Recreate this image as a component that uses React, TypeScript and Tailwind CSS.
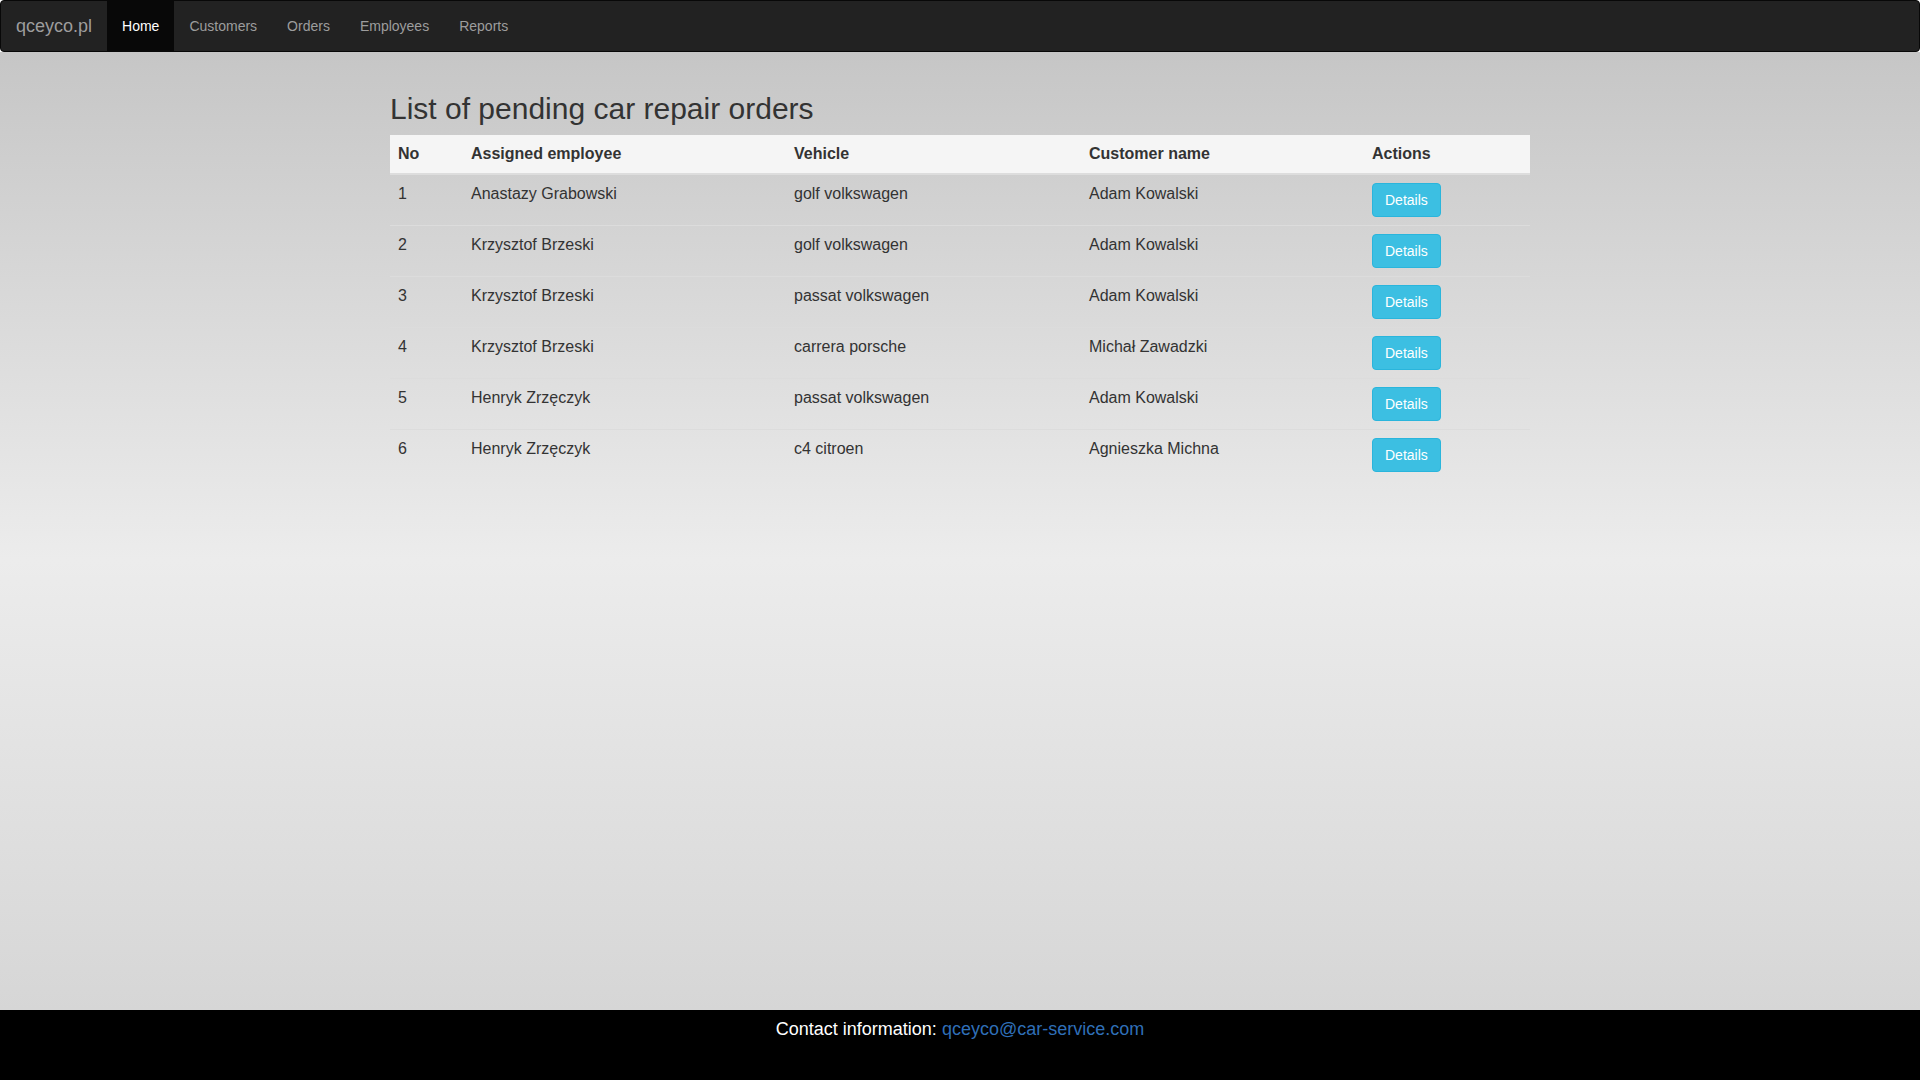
import React from "react";

const rows = [
  { no: 1, emp: "Anastazy Grabowski", vehicle: "golf volkswagen", customer: "Adam Kowalski" },
  { no: 2, emp: "Krzysztof Brzeski", vehicle: "golf volkswagen", customer: "Adam Kowalski" },
  { no: 3, emp: "Krzysztof Brzeski", vehicle: "passat volkswagen", customer: "Adam Kowalski" },
  { no: 4, emp: "Krzysztof Brzeski", vehicle: "carrera porsche", customer: "Michał Zawadzki" },
  { no: 5, emp: "Henryk Zrzęczyk", vehicle: "passat volkswagen", customer: "Adam Kowalski" },
  { no: 6, emp: "Henryk Zrzęczyk", vehicle: "c4 citroen", customer: "Agnieszka Michna" },
];

export default function App() {
  return (
    <div
      className="flex min-h-screen flex-col text-[#333]"
      style={{ fontFamily: '"Liberation Sans", Arial, sans-serif' }}
    >
      <nav className="flex h-[52px] shrink-0 items-stretch rounded border border-[#080808] bg-[#222]">
        <a className="flex items-center px-[15px] text-[18px] text-[#9d9d9d]">qceyco.pl</a>
        <a className="flex items-center bg-[#080808] px-[15px] text-[14px] text-white">Home</a>
        <a className="flex items-center px-[15px] text-[14px] text-[#9d9d9d]">Customers</a>
        <a className="flex items-center px-[15px] text-[14px] text-[#9d9d9d]">Orders</a>
        <a className="flex items-center px-[15px] text-[14px] text-[#9d9d9d]">Employees</a>
        <a className="flex items-center px-[15px] text-[14px] text-[#9d9d9d]">Reports</a>
      </nav>
      <main className="flex-1 bg-[linear-gradient(to_bottom,#c6c6c6_0%,#ececec_53%,#d6d6d6_100%)] pt-[20px]">
        <div className="mx-auto w-[1170px] px-[15px]">
          <h2 className="mt-[20px] mb-[10px] text-[30px] leading-[33px]">List of pending car repair orders</h2>
          <table className="w-full table-fixed border-collapse text-[16px] leading-[22px]">
            <colgroup>
              <col className="w-[73px]" />
              <col className="w-[323px]" />
              <col className="w-[295px]" />
              <col className="w-[283px]" />
              <col className="w-[166px]" />
            </colgroup>
            <thead>
              <tr className="bg-[#f5f5f5]">
                <th className="border-b-2 border-[#ddd] p-2 text-left align-bottom font-bold">No</th>
                <th className="border-b-2 border-[#ddd] p-2 text-left align-bottom font-bold">Assigned employee</th>
                <th className="border-b-2 border-[#ddd] p-2 text-left align-bottom font-bold">Vehicle</th>
                <th className="border-b-2 border-[#ddd] p-2 text-left align-bottom font-bold">Customer name</th>
                <th className="border-b-2 border-[#ddd] p-2 text-left align-bottom font-bold">Actions</th>
              </tr>
            </thead>
            <tbody>
              {rows.map((r, i) => (
                <tr key={r.no} className={i === 0 ? "" : "border-t border-[#dcdcdc]"}>
                  <td className="p-2 align-top">{r.no}</td>
                  <td className="p-2 align-top">{r.emp}</td>
                  <td className="p-2 align-top">{r.vehicle}</td>
                  <td className="p-2 align-top">{r.customer}</td>
                  <td className="p-2 align-top">
                    <button className="block rounded border border-[#2ab5dc] bg-[#3cbfe2] px-3 py-[6px] text-[14px] leading-[20px] text-white">
                      Details
                    </button>
                  </td>
                </tr>
              ))}
            </tbody>
          </table>
        </div>
      </main>
      <footer className="h-[70px] shrink-0 bg-black pt-[6px] text-center text-[18px] leading-[26px] text-white">
        Contact information: <a className="text-[#2f6fb8]">qceyco@car-service.com</a>
      </footer>
    </div>
  );
}
